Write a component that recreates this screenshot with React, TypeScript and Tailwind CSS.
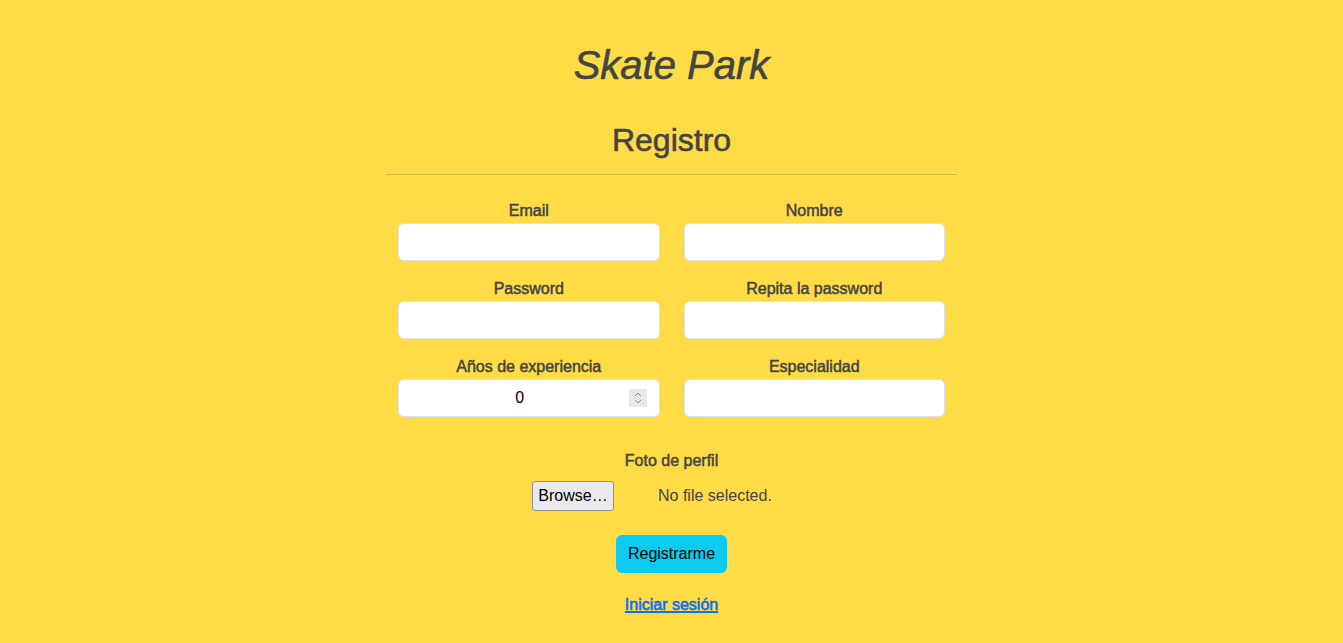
import React from 'react';

const labelCls =
  'block text-center text-[16px] leading-6 text-[#444] [-webkit-text-stroke:0.5px_#444]';
const inputCls =
  'h-[38px] w-full rounded-[6px] border border-[#dee2e6] bg-white';

function Field({ label, children }: { label: string; children?: React.ReactNode }) {
  return (
    <div className="px-3">
      <span className={labelCls}>{label}</span>
      {children ?? <div className={inputCls} />}
    </div>
  );
}

export default function App() {
  return (
    <div className="min-h-[643px] bg-[#ffdc45] font-['Liberation_Sans',Arial,sans-serif] text-[#444]">
      <div className="pt-[41px] text-center">
        <h1 className="text-[40px] leading-[48px] italic [-webkit-text-stroke:0.6px_#444]">Skate Park</h1>
        <h2 className="mt-8 text-[32px] leading-[38px] [-webkit-text-stroke:0.6px_#444]">Registro</h2>
      </div>

      <div className="mx-auto w-[571px]">
        <hr className="mt-[15px] border-t border-[#d0b646]" />

        <div className="mt-6 grid grid-cols-2 gap-y-4">
          <Field label="Email" />
          <Field label="Nombre" />
          <Field label="Password" />
          <Field label="Repita la password" />
          <Field label="Años de experiencia">
            <div className={`${inputCls} flex items-center pl-3 pr-[12px]`}>
              <span className="flex-1 text-center text-[16px] text-black">0</span>
              <span className="flex h-[18px] w-[18px] flex-col items-center justify-center bg-[#e9e9ed]">
                <svg width="8" height="14" viewBox="0 0 8 14" fill="none" stroke="#8a8a90" strokeWidth="1">
                  <path d="M1 5 L4 2 L7 5" />
                  <path d="M1 9 L4 12 L7 9" />
                </svg>
              </span>
            </div>
          </Field>
          <Field label="Especialidad" />
        </div>

        <div className="mt-8 text-center">
          <span className={labelCls}>Foto de perfil</span>
          <div className="mx-auto mt-2 flex w-[279px] items-center">
            <span className="flex h-[30px] w-[82px] items-center justify-center rounded-[3px] border border-[#8f8f9d] bg-[#e9e9ed] text-[16px] text-black">
              Browse…
            </span>
            <span className="ml-[44px] text-[16px]">No file selected.</span>
          </div>
        </div>

        <div className="mt-6 flex justify-center">
          <button className="h-[38px] rounded-[6px] bg-[#0dcaf0] px-3 text-[16px] text-black">
            Registrarme
          </button>
        </div>

        <div className="mt-5 text-center">
          <a href="#" className="text-[16px] leading-6 text-[#0d6efd] underline decoration-2 [-webkit-text-stroke:0.6px_#0d6efd]">
            Iniciar sesión
          </a>
        </div>
      </div>
    </div>
  );
}
